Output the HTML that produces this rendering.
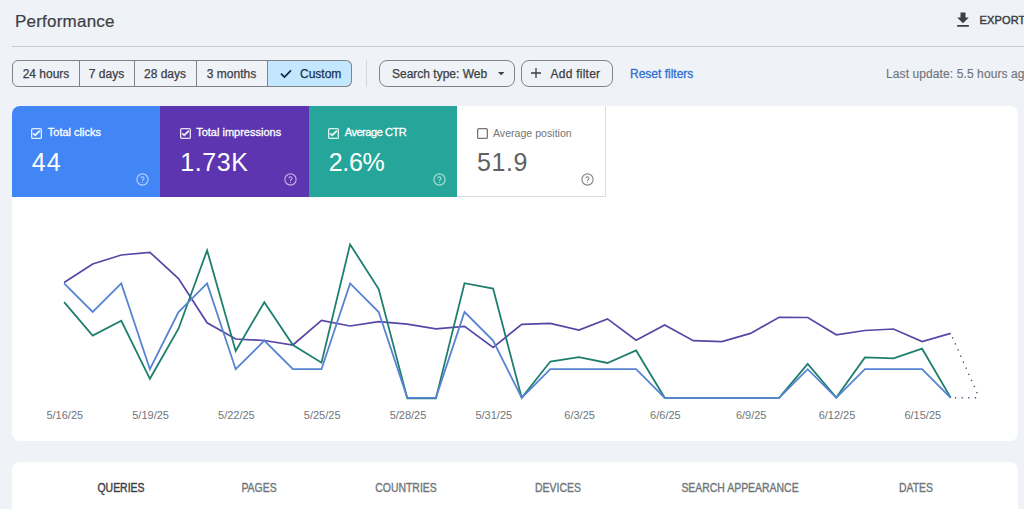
<!DOCTYPE html>
<html><head><meta charset="utf-8">
<style>
*{margin:0;padding:0;box-sizing:border-box}
html,body{width:1024px;height:509px;overflow:hidden;background:#eff2f7;font-family:"Liberation Sans",sans-serif}
.a{position:absolute;white-space:nowrap}
#title{left:15px;top:12px;font-size:17px;letter-spacing:0.22px;color:#3c4043;-webkit-text-stroke:0.2px #3c4043}
#export{left:979.5px;top:14px;font-size:11px;color:#3c4043;letter-spacing:0.15px;-webkit-text-stroke:0.45px #3c4043}
#hr{left:12px;top:46px;width:1012px;height:1px;background:#c7c9cd}
.seg{top:60px;height:26.5px;border:1px solid #7f8286;font-size:12px;color:#3c4043;line-height:26px;text-align:center;-webkit-text-stroke:0.25px #3c4043}
.btn{top:60px;height:26.5px;border:1px solid #7f8286;border-radius:8px;font-size:12px;color:#3c4043;line-height:26px;-webkit-text-stroke:0.25px #3c4043}
#card{left:11.8px;top:106.3px;width:1005.8px;height:334.4px;background:#fff;border-radius:8px;overflow:hidden}
#card2{left:11.8px;top:461.5px;width:1005.8px;height:60px;background:#fff;border-radius:8px}
.tile{top:0;height:90.4px;width:148.4px}
.lab{position:absolute;left:36px;top:19.9px;font-size:11px;color:#fff;-webkit-text-stroke:0.3px #fff}
.chk{position:absolute;left:19.7px;top:21.6px;width:11px;height:11px}
.val{position:absolute;left:20px;top:41.5px;font-size:25px;color:#fff;letter-spacing:0.6px}
.help{position:absolute;left:124.2px;top:67.2px;width:13px;height:13px}
.xl{top:409px;font-size:11px;color:#70757a;width:60px;text-align:center}
.tab{top:481px;font-size:12px;color:#70757a;-webkit-text-stroke:0.35px #70757a;width:160px;text-align:center;transform:scaleX(0.87)}
</style></head><body>
<div class="a" id="title">Performance</div>
<svg class="a" style="left:953px;top:10px" width="20" height="20" viewBox="0 0 24 24"><path fill="#3c4043" d="M19 9h-4V3H9v6H5l7 7 7-7zM5 18v2h14v-2H5z"/></svg>
<div class="a" id="export">EXPORT</div>
<div class="a" id="hr"></div>

<div class="a seg" style="left:12px;width:68px;border-radius:6px 0 0 6px">24 hours</div>
<div class="a seg" style="left:79px;width:56px;border-left:none">7 days</div>
<div class="a seg" style="left:134px;width:63px;border-left:none">28 days</div>
<div class="a seg" style="left:196px;width:72px;border-left:none">3 months</div>
<div class="a seg" style="left:268px;width:84px;border-left:none;border-radius:0 6px 6px 0;background:#c2e7ff;color:#17324f;-webkit-text-stroke:0.25px #17324f">
<svg style="position:absolute;left:11.5px;top:8.2px" width="12" height="10" viewBox="0 0 12 10"><path fill="none" stroke="#0b2a45" stroke-width="1.7" d="M1 4.6l3.5 3.4L11 1.3"/></svg><span style="position:absolute;left:32px">Custom</span></div>
<div class="a" style="left:365.6px;top:59.8px;width:1px;height:27px;background:#d3d6db"></div>
<div class="a btn" style="left:379px;width:136px;padding-left:12px">Search type: Web<svg style="position:absolute;left:118px;top:10.9px" width="6.4" height="3.3" viewBox="0 0 6.4 3.3"><path fill="#3c4043" d="M0 0h6.4L3.2 3.3z"/></svg></div>
<div class="a btn" style="left:521px;width:92px;padding-left:28.5px;letter-spacing:0.25px">Add filter<svg style="position:absolute;left:9px;top:7.3px" width="10" height="10" viewBox="0 0 10 10"><path fill="#3c4043" d="M4.35 0h1.3v4.35H10v1.3H5.65V10H4.35V5.65H0V4.35h4.35z"/></svg></div>
<div class="a" style="left:630px;top:66.5px;font-size:12px;color:#2f6fcf;-webkit-text-stroke:0.3px #2f6fcf">Reset filters</div>
<div class="a" style="left:886px;top:66.5px;font-size:12px;color:#70757a;letter-spacing:0.1px;-webkit-text-stroke:0.15px #70757a">Last update: 5.5 hours ago</div>

<div class="a" id="card">
 <div class="a tile" style="left:0;background:#4285f4"><svg class="chk" viewBox="0 0 11 11"><rect x="0.65" y="0.65" width="9.7" height="9.7" rx="1.2" fill="none" stroke="rgba(255,255,255,0.85)" stroke-width="1.3"/><path d="M2.1 5.4l2.1 1.8 4.7-4.5" fill="none" stroke="rgba(255,255,255,0.85)" stroke-width="1.9"/></svg><div class="lab">Total clicks</div><div class="val" style="letter-spacing:1px">44</div><svg class="help" viewBox="0 0 13 13"><circle cx="6.5" cy="6.5" r="5.6" fill="none" stroke="rgba(255,255,255,0.6)" stroke-width="1.2"/><path d="M5 5.3a1.5 1.5 0 1 1 2.1 1.4c-.4.2-.6.4-.6.8v.4" fill="none" stroke="rgba(255,255,255,0.6)" stroke-width="1.1"/><circle cx="6.5" cy="9.3" r="0.6" fill="rgba(255,255,255,0.6)"/></svg></div>
 <div class="a tile" style="left:148.4px;background:#5e35b1"><svg class="chk" viewBox="0 0 11 11"><rect x="0.65" y="0.65" width="9.7" height="9.7" rx="1.2" fill="none" stroke="rgba(255,255,255,0.85)" stroke-width="1.3"/><path d="M2.1 5.4l2.1 1.8 4.7-4.5" fill="none" stroke="rgba(255,255,255,0.85)" stroke-width="1.9"/></svg><div class="lab">Total impressions</div><div class="val">1.73K</div><svg class="help" viewBox="0 0 13 13"><circle cx="6.5" cy="6.5" r="5.6" fill="none" stroke="rgba(255,255,255,0.6)" stroke-width="1.2"/><path d="M5 5.3a1.5 1.5 0 1 1 2.1 1.4c-.4.2-.6.4-.6.8v.4" fill="none" stroke="rgba(255,255,255,0.6)" stroke-width="1.1"/><circle cx="6.5" cy="9.3" r="0.6" fill="rgba(255,255,255,0.6)"/></svg></div>
 <div class="a tile" style="left:296.9px;background:#26a69a"><svg class="chk" viewBox="0 0 11 11"><rect x="0.65" y="0.65" width="9.7" height="9.7" rx="1.2" fill="none" stroke="rgba(255,255,255,0.85)" stroke-width="1.3"/><path d="M2.1 5.4l2.1 1.8 4.7-4.5" fill="none" stroke="rgba(255,255,255,0.85)" stroke-width="1.9"/></svg><div class="lab" style="letter-spacing:-0.45px">Average CTR</div><div class="val" style="letter-spacing:-0.3px">2.6%</div><svg class="help" viewBox="0 0 13 13"><circle cx="6.5" cy="6.5" r="5.6" fill="none" stroke="rgba(255,255,255,0.6)" stroke-width="1.2"/><path d="M5 5.3a1.5 1.5 0 1 1 2.1 1.4c-.4.2-.6.4-.6.8v.4" fill="none" stroke="rgba(255,255,255,0.6)" stroke-width="1.1"/><circle cx="6.5" cy="9.3" r="0.6" fill="rgba(255,255,255,0.6)"/></svg></div>
 <div class="a tile" style="left:445.2px;width:149px;background:#fff;border-right:1px solid #dadce0;border-bottom:1px solid #dadce0"><svg class="chk" viewBox="0 0 11 11"><rect x="0.65" y="0.65" width="9.7" height="9.7" rx="1.2" fill="none" stroke="#757575" stroke-width="1.3"/></svg><div class="lab" style="color:#757575;-webkit-text-stroke:0;font-size:10.6px;top:20.6px">Average position</div><div class="val" style="color:#616161">51.9</div><svg class="help" viewBox="0 0 13 13"><circle cx="6.5" cy="6.5" r="5.6" fill="none" stroke="#8a8a8a" stroke-width="1.2"/><path d="M5 5.3a1.5 1.5 0 1 1 2.1 1.4c-.4.2-.6.4-.6.8v.4" fill="none" stroke="#8a8a8a" stroke-width="1.1"/><circle cx="6.5" cy="9.3" r="0.6" fill="#8a8a8a"/></svg></div>
</div>

<svg class="a" style="left:0;top:0" width="1024" height="509">
<g fill="none" stroke-width="1.8" stroke-linejoin="miter">
<polyline stroke="#5846a6" stroke-width="1.7" points="64.1,282.5 92.7,264.0 121.3,255.0 149.9,252.3 178.5,278.6 207.1,322.8 235.7,339.0 264.3,340.5 292.9,345.0 321.5,320.4 350.1,326.0 378.7,321.6 407.3,324.2 435.9,328.9 464.5,326.4 493.1,347.4 521.7,324.4 550.3,323.3 578.9,330.1 607.5,318.9 636.1,340.3 664.7,325.0 693.3,340.7 721.9,341.6 750.5,333.4 779.1,317.3 807.7,317.5 836.3,334.8 864.9,330.5 893.5,329.0 922.1,341.6 950.7,333.4"/>
<polyline stroke="#1f7f6e" points="64.1,302.2 92.7,335.5 121.3,320.8 149.9,378.8 178.5,328.7 207.1,250.3 235.7,350.9 264.3,302.2 292.9,345.0 321.5,362.7 350.1,244.4 378.7,289.0 407.3,398.4 435.9,398.4 464.5,283.2 493.1,288.5 521.7,397.8 550.3,361.5 578.9,357.2 607.5,363.0 636.1,350.5 664.7,397.8 693.3,397.8 721.9,397.8 750.5,397.8 779.1,397.8 807.7,364.0 836.3,397.6 864.9,357.4 893.5,358.3 922.1,348.7 950.7,397.6"/>
<polyline stroke="#5784d2" points="64.1,283.4 92.7,312.0 121.3,283.4 149.9,369.2 178.5,312.0 207.1,283.4 235.7,369.2 264.3,340.6 292.9,369.2 321.5,369.2 350.1,283.4 378.7,312.0 407.3,397.8 435.9,397.8 464.5,312.0 493.1,340.6 521.7,397.8 550.3,369.2 578.9,369.2 607.5,369.2 636.1,369.2 664.7,397.8 693.3,397.8 721.9,397.8 750.5,397.8 779.1,397.8 807.7,369.2 836.3,397.8 864.9,369.2 893.5,369.2 922.1,369.2 950.7,397.8"/>
<polyline stroke="#514682" stroke-width="1.4" stroke-dasharray="1.3 5.35" stroke-dashoffset="-4.2" points="950.7,333.4 979.3,397.8"/>
<polyline stroke="#50567e" stroke-width="1.4" stroke-dasharray="1.3 5.35" stroke-dashoffset="-4.2" points="950.7,397.8 979.3,397.8"/>
</g>
</svg>
<div class="a xl" style="left:34.8px">5/16/25</div>
<div class="a xl" style="left:120.6px">5/19/25</div>
<div class="a xl" style="left:206.4px">5/22/25</div>
<div class="a xl" style="left:292.2px">5/25/25</div>
<div class="a xl" style="left:378.0px">5/28/25</div>
<div class="a xl" style="left:463.8px">5/31/25</div>
<div class="a xl" style="left:549.6px">6/3/25</div>
<div class="a xl" style="left:635.4px">6/6/25</div>
<div class="a xl" style="left:721.2px">6/9/25</div>
<div class="a xl" style="left:807.0px">6/12/25</div>
<div class="a xl" style="left:892.8px">6/15/25</div>
<div class="a" id="card2"></div>
<div class="a tab" style="left:40.5px;color:#3c4043;-webkit-text-stroke:0.4px #3c4043">QUERIES</div>
<div class="a tab" style="left:179.4px">PAGES</div>
<div class="a tab" style="left:326.0px">COUNTRIES</div>
<div class="a tab" style="left:478.0px">DEVICES</div>
<div class="a tab" style="left:659.9px">SEARCH APPEARANCE</div>
<div class="a tab" style="left:836.0px">DATES</div>
</body></html>
